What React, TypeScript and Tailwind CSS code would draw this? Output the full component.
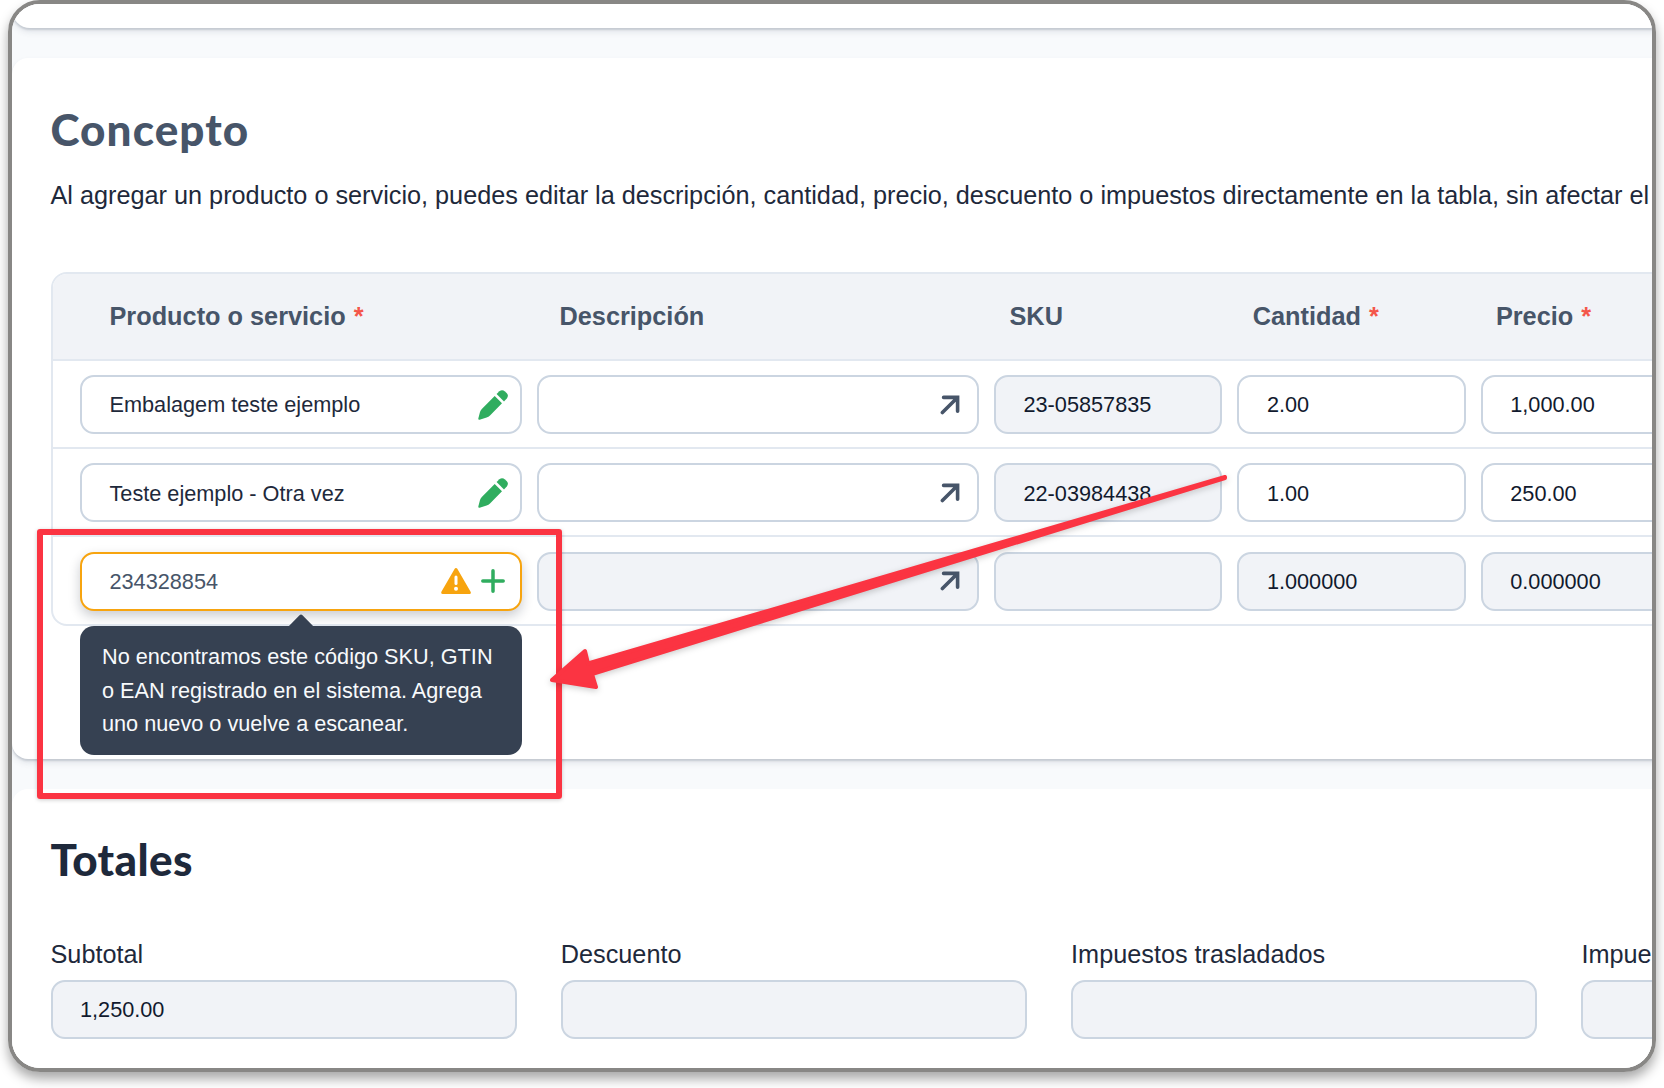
import clsx from "clsx";

interface Row {
	product: string;
	sku: string;
	quantity: string;
	price: string;
	notFound?: boolean;
}

const rows: Row[] = [
	{ product: "Embalagem teste ejemplo", sku: "23-05857835", quantity: "2.00", price: "1,000.00" },
	{ product: "Teste ejemplo - Otra vez", sku: "22-03984438", quantity: "1.00", price: "250.00" },
	{ product: "234328854", sku: "", quantity: "1.000000", price: "0.000000", notFound: true },
];

const headers = [
	{ label: "Producto o servicio", required: true },
	{ label: "Descripción" },
	{ label: "SKU" },
	{ label: "Cantidad", required: true },
	{ label: "Precio", required: true },
];

const totals = [
	{ label: "Subtotal", value: "1,250.00" },
	{ label: "Descuento", value: "" },
	{ label: "Impuestos trasladados", value: "" },
	{ label: "Impue", value: "" },
];

function PencilIcon() {
	return (
		<svg viewBox="0 0 30 30" className="size-[30px] shrink-0 fill-[#30ad5f]">
			<path d="M16.7 5.9 24 13.2 12 25.4Q10.6 26.9 8.6 27.6L1.6 29.8Q.1 30 .3 28.6L2 22Q2.5 20.2 3.8 18.9Z" />
			<path d="M18.6 4 21.4 1.2Q24.2-1 27 1.4L28.8 3.2Q31 5.8 28.8 8.4L26 11.4Z" />
		</svg>
	);
}

function ArrowIcon() {
	return (
		<svg
			viewBox="0 0 20 20"
			className="size-5 shrink-0 fill-none stroke-[#475569] stroke-[3.6]"
			strokeLinecap="round"
		>
			<path d="M3.6 2.4H17.6V16.2M2.4 17.6 17 3" />
		</svg>
	);
}

function WarningIcon() {
	return (
		<svg viewBox="0 0 30 27" className="h-[27px] w-[30px] shrink-0">
			<path
				d="M15 1.6 28.3 24.6H1.7Z"
				fill="#f7a40f"
				stroke="#f7a40f"
				strokeWidth="3"
				strokeLinejoin="round"
			/>
			<path d="M15 9V15.6" stroke="#fff" strokeWidth="3" strokeLinecap="round" />
			<circle cx="15" cy="20.8" r="2" fill="#fff" />
		</svg>
	);
}

function PlusIcon() {
	return (
		<svg viewBox="0 0 24 24" className="size-6 shrink-0 stroke-[#30ad5f] stroke-[3.5]" strokeLinecap="round">
			<path d="M12 1.8V22.2M1.8 12H22.2" />
		</svg>
	);
}

function Field({
	value,
	disabled,
	className,
	children,
}: {
	value?: string;
	disabled?: boolean;
	className?: string;
	children?: React.ReactNode;
}) {
	return (
		<div
			className={clsx(
				"relative flex h-[59px] items-center rounded-[14px] border-2 pl-[27.5px] text-[21.7px] leading-none",
				disabled ? "bg-[#f1f3f7]" : "bg-white",
				className ?? "border-[#cbd5e1] text-[#111a2e]",
			)}
		>
			<span className="flex-1 whitespace-nowrap pt-px">{value}</span>
			{children}
		</div>
	);
}

function NotFoundTooltip() {
	return (
		<div className="absolute -left-0.5 top-[72px] z-10 w-[442px] rounded-[14px] bg-[#364152] px-[22px] pb-[15px] pt-[14.5px] text-[21.7px] leading-[33.2px] text-[#f8fafc]">
			<svg viewBox="0 0 26 13" className="absolute -top-3 left-[208px] h-[13px] w-[26px] fill-[#364152]">
				<path d="M0 13 11.5 1.2Q13-.4 14.5 1.2L26 13Z" />
			</svg>
			<p className="whitespace-nowrap">No encontramos este código SKU, GTIN</p>
			<p className="whitespace-nowrap">o EAN registrado en el sistema. Agrega</p>
			<p className="whitespace-nowrap">uno nuevo o vuelve a escanear.</p>
		</div>
	);
}

function ProductTable() {
	return (
		<div className="w-[1900px] rounded-[16px] border-2 border-[#e2e8f0]">
			<div className="grid h-[84.6px] grid-cols-[450px_450px_243.2px_243.2px_243.2px] items-center rounded-t-[14px] bg-[#f1f3f7] pl-[57px] pt-[2px] text-[25.3px] font-bold text-[#475569]">
				{headers.map((header) => (
					<div key={header.label} className="whitespace-nowrap">
						{header.label}
						{header.required && <span className="ml-2 text-[#f4564a]">*</span>}
					</div>
				))}
			</div>
			{rows.map((row) => (
				<div
					key={row.product}
					className="grid h-[88.4px] grid-cols-[442px_442px_228.4px_228.4px_228.4px] gap-x-[15px] border-t-2 border-[#e2e8f0] pl-[27.5px] pt-[14.5px]"
				>
					<Field
						value={row.product}
						className={
							row.notFound
								? "border-[#f7a40f] text-[#475569] shadow-[0_5px_12px_rgba(15,23,42,0.22)]"
								: "border-[#cbd5e1] text-[#1e293b]"
						}
					>
						{row.notFound ? (
							<div className="mr-[15px] flex items-center gap-2.5">
								<WarningIcon />
								<PlusIcon />
							</div>
						) : (
							<div className="mr-3">
								<PencilIcon />
							</div>
						)}
						{row.notFound && <NotFoundTooltip />}
					</Field>
					<Field disabled={row.notFound}>
						<div className="mr-[17px]">
							<ArrowIcon />
						</div>
					</Field>
					<Field value={row.sku} disabled />
					<Field value={row.quantity} disabled={row.notFound} />
					<Field value={row.price} disabled={row.notFound} />
				</div>
			))}
		</div>
	);
}

// Red box and arrow drawn over the form
function Annotation() {
	return (
		<>
			<div className="absolute left-[25px] top-[525px] z-20 h-[270px] w-[525px] rounded-[3px] border-[6px] border-[#fb3442] shadow-[0_1px_4px_rgba(0,0,0,0.2)]" />
			<svg
				viewBox="540 460 700 240"
				className="absolute left-[528px] top-[456px] z-20 h-[240px] w-[700px] drop-shadow-[0_2px_3px_rgba(0,0,0,0.2)]"
			>
				<path
					d="M552 680 585 651 588 663.5 1225 477 1225 478 592 674 596 687Z"
					fill="#fb3442"
					stroke="#fb3442"
					strokeWidth="4"
					strokeLinejoin="round"
				/>
			</svg>
		</>
	);
}

export default function App() {
	return (
		<div className="h-[1088px] w-[1664px] overflow-hidden bg-white px-2 font-['Liberation_Sans',Arial,sans-serif]">
			<div className="relative h-[1072px] w-[1648px] rounded-[32px] border-4 border-[#888785] shadow-[0_7px_12px_rgba(0,0,0,0.34)]">
				<div className="flex h-full flex-col gap-[30px] overflow-hidden rounded-[28px] bg-[#f8fafc] text-[#1e293b]">
					<div className="h-6 w-[2000px] shrink-0 rounded-bl-[18px] bg-white shadow-[0_2px_2px_rgba(71,85,105,0.2),0_4px_6px_rgba(71,85,105,0.12)]" />
					<section className="h-[701px] w-[2000px] shrink-0 rounded-l-[16px] bg-white pl-[38.5px] pt-[43px] shadow-[0_2px_2px_rgba(71,85,105,0.2),0_4px_6px_rgba(71,85,105,0.12)]">
						<h2 className="font-[Lato] text-[44px] font-black leading-[56px] tracking-[1.1px] text-[#475569]">
							Concepto
						</h2>
						<p className="mt-[22px] whitespace-nowrap text-[25.26px] leading-[32px]">
							Al agregar un producto o servicio, puedes editar la descripción, cantidad, precio, descuento o
							impuestos directamente en la tabla, sin afectar el
						</p>
						<div className="mt-[61px]">
							<ProductTable />
						</div>
					</section>
					<section className="h-[400px] w-[2000px] shrink-0 rounded-l-[16px] bg-white pl-[38.5px] pt-[42px]">
						<h2 className="font-[Lato] text-[44px] font-black leading-[56px] tracking-[0.4px]">Totales</h2>
						<div className="mt-[51px] grid grid-cols-[466px_466px_466px_466px] gap-x-[44.3px]">
							{totals.map((total) => (
								<div key={total.label}>
									<div className="mb-[10px] text-[25.26px] leading-[32px]">{total.label}</div>
									<Field value={total.value} disabled />
								</div>
							))}
						</div>
					</section>
				</div>
				<Annotation />
			</div>
		</div>
	);
}
